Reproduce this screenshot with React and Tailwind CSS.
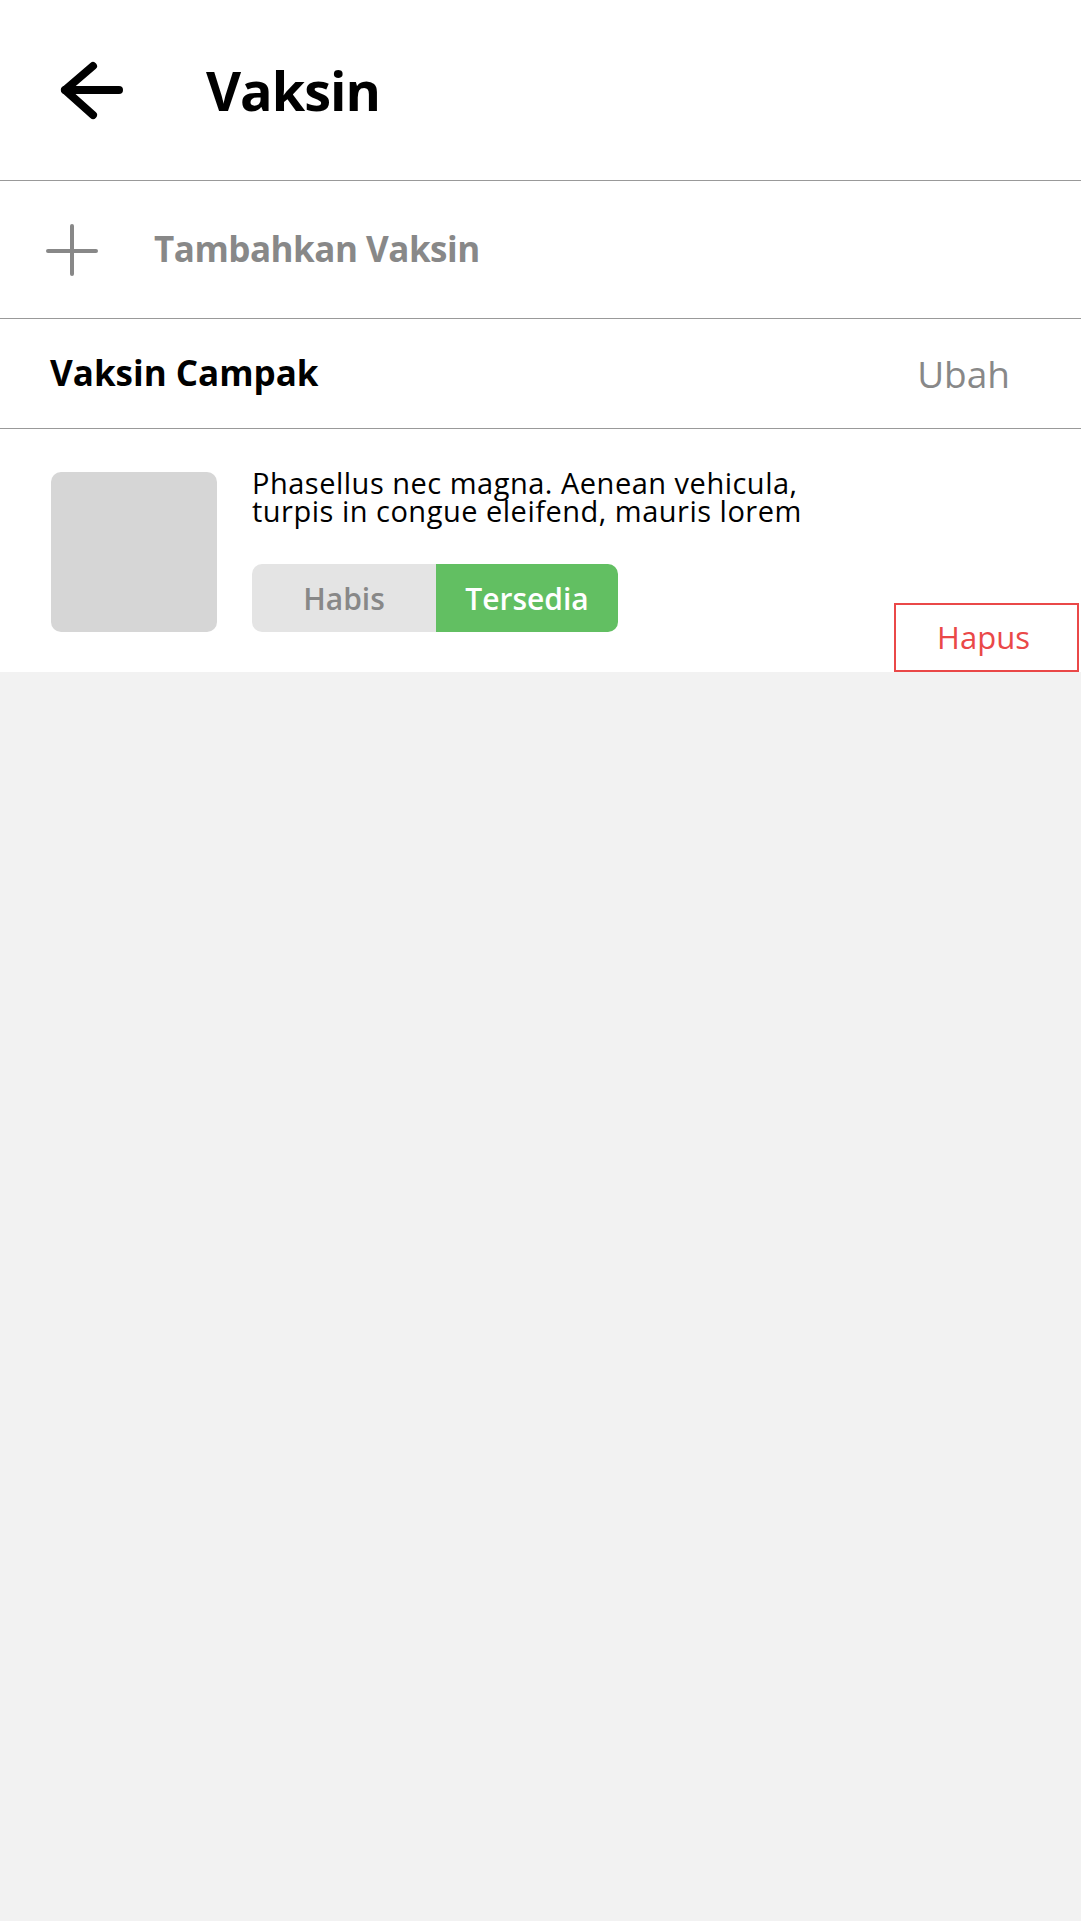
import React, { useState } from 'react'

const ArrowLeft = () => (
  <svg width="68" height="64" viewBox="0 0 68 64" fill="none" stroke="#000" strokeWidth="8" strokeLinecap="round" strokeLinejoin="round">
    <path d="M36 8 L8 32 L36 57" />
    <path d="M8 32 H62" />
  </svg>
)

const Plus = () => (
  <svg width="52" height="52" viewBox="0 0 52 52" fill="none" stroke="#888" strokeWidth="4" strokeLinecap="round">
    <path d="M26 2 V50" />
    <path d="M2 27 H50" />
  </svg>
)

const App = () => {
  const [tersedia, setTersedia] = useState(true)

  return (
    <div className="min-h-[1921px] bg-[#f2f2f2] font-['Open_Sans','Noto_Sans',sans-serif]">
      {/* Header */}
      <div className="flex h-[181px] items-center border-b border-[#999] bg-white pl-[57px]">
        <ArrowLeft />
        <h1 className="ml-[81px] text-[54px] font-bold leading-none tracking-[-1px] text-black">Vaksin</h1>
      </div>

      {/* Tambahkan */}
      <div className="flex h-[138px] items-center border-b border-[#999] bg-white pl-[46px]">
        <Plus />
        <span className="ml-[56px] text-[35px] font-bold tracking-[-0.5px] text-[#888]">Tambahkan Vaksin</span>
      </div>

      {/* Nama vaksin */}
      <div className="flex h-[110px] items-center justify-between border-b border-[#999] bg-white pl-[50px] pr-[71px]">
        <span className="text-[35px] font-bold text-black">Vaksin Campak</span>
        <span className="text-[37px] text-[#888]">Ubah</span>
      </div>

      {/* Item */}
      <div className="flex h-[243px] bg-white">
        <div className="ml-[51px] mt-[43px] h-[160px] w-[166px] rounded-[10px] bg-[#d6d6d6]"></div>
        <div className="ml-[35px] mt-[40px] flex flex-col">
          <p className="text-[29px] leading-[28px] tracking-[0.5px] text-black">
            Phasellus nec magna. Aenean vehicula,
            <br />
            turpis in congue eleifend, mauris lorem
          </p>
          <div className="mt-[39px] flex h-[68px] w-[366px] overflow-hidden rounded-[10px]">
            <button
              type="button"
              onClick={() => setTersedia(false)}
              className={tersedia
                ? 'flex w-[184px] items-center justify-center bg-[#e4e4e4] text-[30px] font-semibold text-[#888]'
                : 'flex w-[184px] items-center justify-center bg-[#62bf62] text-[30px] font-semibold text-white'}
            >
              Habis
            </button>
            <button
              type="button"
              onClick={() => setTersedia(true)}
              className={tersedia
                ? 'flex flex-1 items-center justify-center bg-[#62bf62] text-[30px] font-semibold text-white'
                : 'flex flex-1 items-center justify-center bg-[#e4e4e4] text-[30px] font-semibold text-[#888]'}
            >
              Tersedia
            </button>
          </div>
        </div>
        <button
          type="button"
          className="mr-[2px] ml-auto flex h-[69px] w-[185px] items-center justify-center self-end border-2 border-[#ea4848] pr-[6px] text-[31px] text-[#ea4848]"
        >
          Hapus
        </button>
      </div>
    </div>
  )
}

export default App
